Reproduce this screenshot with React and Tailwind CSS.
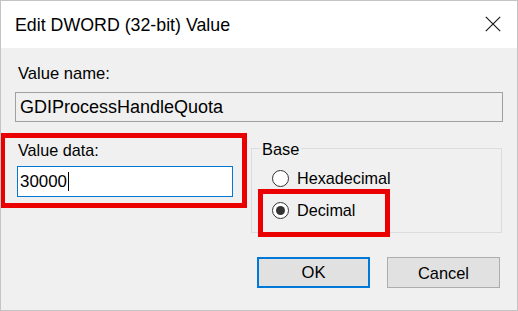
export default function App() {
  return (
    <div className="relative w-[518px] h-[311px] bg-[#f0f0f0] border border-[#c4c4c4] flex flex-col text-black font-['Liberation_Sans',Arial,sans-serif] overflow-hidden">
      {/* Title bar */}
      <div className="h-[47px] shrink-0 bg-white flex items-center justify-between pl-[14px] pr-[16px]">
        <span className="text-[17.8px] leading-[20px] mt-[1px]">Edit DWORD (32-bit) Value</span>
        <svg width="16" height="16" viewBox="0 0 16 16" className="mt-[-1px]">
          <path d="M0.8 0.8 L15.2 15.2 M15.2 0.8 L0.8 15.2" stroke="#1a1a1a" strokeWidth="1.2" fill="none" />
        </svg>
      </div>

      {/* Body */}
      <div className="flex flex-col px-[14px]">
        <div className="mt-[16px] pl-[3px] text-[16.6px] leading-[20px]">Value name:</div>
        <div className="mt-[8px] h-[30px] border border-[#a0a0a0] bg-[#f0f0f0] flex items-center pl-[4px] text-[18px] leading-[20px]">
          GDIProcessHandleQuota
        </div>

        <div className="mt-[17px] flex">
          {/* Value data */}
          <div className="ml-[2px] w-[216px] flex flex-col">
            <div className="mt-[1px] pl-[1px] text-[16.2px] leading-[20px]">Value data:</div>
            <div className="mt-[6px] h-[31px] border border-[#0078d7] bg-white flex items-center pl-[2px] text-[16.9px] leading-[20px]">
              <span>30000</span>
              <span className="ml-[1px] w-px h-[19px] bg-black"></span>
            </div>
          </div>

          {/* Base group */}
          <div className="ml-[18px] w-[251px] relative mt-[9px] h-[85px] border border-[#dcdcdc] flex flex-col pt-[19px] pl-[20px] gap-[12px]">
            <span className="absolute -top-[10px] left-[8px] px-[2px] bg-[#f0f0f0] text-[16.4px] leading-[20px]">Base</span>
            <div className="flex items-center h-[20px] gap-[8px]">
              <span className="w-[17px] h-[17px] rounded-full border border-[#333333] bg-white"></span>
              <span className="text-[16.2px] leading-[20px]">Hexadecimal</span>
            </div>
            <div className="flex items-center h-[20px] gap-[8px]">
              <span className="w-[17px] h-[17px] rounded-full border border-[#333333] bg-white flex items-center justify-center">
                <span className="w-[9px] h-[9px] rounded-full bg-[#333333]"></span>
              </span>
              <span className="text-[16.2px] leading-[20px]">Decimal</span>
            </div>
          </div>
        </div>

        {/* Buttons */}
        <div className="mt-[24px] flex justify-end gap-[17px] mr-[3px]">
          <button className="w-[113px] h-[31px] bg-[#e1e1e1] border-2 border-[#0078d7] text-[16.6px] leading-[20px] flex items-center justify-center">
            OK
          </button>
          <button className="w-[113px] h-[31px] bg-[#e1e1e1] border border-[#adadad] text-[16.4px] leading-[20px] flex items-center justify-center">
            Cancel
          </button>
        </div>
      </div>

      {/* Red annotation boxes */}
      <div className="absolute left-[-1px] top-[132px] w-[247px] h-[75px] border-[5px] border-[#ea0000] pointer-events-none"></div>
      <div className="absolute left-[257px] top-[188px] w-[132px] h-[48px] border-[5px] border-[#ea0000] pointer-events-none"></div>
    </div>
  );
}
